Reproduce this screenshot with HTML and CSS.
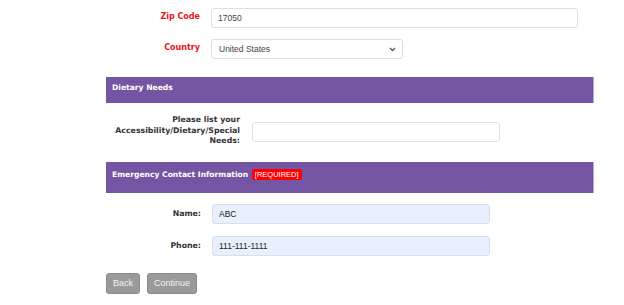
FILE: index.html
```html
<!DOCTYPE html>
<html lang="en">
<head>
    <meta charset="UTF-8">
    <title>Registration - Contact</title>
    <link rel="stylesheet" href="styles.css">
</head>
<body>
    <div class="form">
        <!-- Address tail -->
        <div class="row row-address">
            <label class="req">Zip Code</label>
            <input type="text" class="zip" value="17050">
        </div>
        <div class="row row-address row-country">
            <label class="req">Country</label>
            <div class="select-wrap">
                <select class="country">
                    <option>United States</option>
                </select>
                <svg class="chevron" width="7" height="5" viewBox="0 0 7 5"><path d="M1 1 L3.5 3.5 L6 1" fill="none" stroke="#555" stroke-width="1.3"/></svg>
            </div>
        </div>

        <!-- Dietary -->
        <div class="section-head">Dietary Needs</div>
        <div class="row row-dietary">
            <label>Please list your Accessibility/Dietary/Special Needs:</label>
            <input type="text" class="dietary">
        </div>

        <!-- Emergency contact -->
        <div class="section-head tall">Emergency Contact Information <span class="badge">[REQUIRED]</span></div>
        <div class="row row-contact">
            <label>Name:</label>
            <input type="text" class="filled" value="ABC">
        </div>
        <div class="row row-contact">
            <label>Phone:</label>
            <input type="text" class="filled" value="111-111-1111">
        </div>

        <div class="buttons">
            <button>Back</button>
            <button>Continue</button>
        </div>
    </div>
</body>
</html>
```

FILE: styles.css
```css
        body {
            margin: 0;
            background: #fff;
            font-family: 'DejaVu Sans', Verdana, sans-serif;
        }

        .form {
            width: 488px;
            margin-left: 106px;
            padding-top: 8px;
        }

        .row {
            display: grid;
            align-items: center;
        }

        .row label {
            text-align: right;
            font-weight: bold;
            font-size: 7.8px;
            color: #333;
        }

        .row label.req {
            color: #e8141b;
            font-size: 8px;
        }

        input, select {
            box-sizing: border-box;
            height: 20px;
            border: 1px solid #dedede;
            border-radius: 3px;
            background: #fff;
            font-family: 'Liberation Sans', Arial, sans-serif;
            font-size: 8.5px;
            color: #444;
            padding: 0 6px;
        }

        /* Zip / country */
        .row-address {
            grid-template-columns: 94px 367px;
            column-gap: 11px;
        }

        .row-address label {
            position: relative;
            top: -2px;
        }

        .row-country {
            margin-top: 11px;
        }

        .select-wrap {
            position: relative;
            width: 192px;
            height: 20px;
        }

        .country {
            display: block;
            width: 192px;
            padding-left: 7px;
            appearance: none;
            -webkit-appearance: none;
        }

        .chevron {
            position: absolute;
            right: 7px;
            top: 8px;
        }

        /* Purple section headers */
        .section-head {
            margin-top: 18px;
            height: 26px;
            box-sizing: border-box;
            padding: 6px 6px 0;
            background: #7455a3;
            border-right: 1px solid #b7a7d2;
            color: #fff;
            font-weight: bold;
            font-size: 7.6px;
        }

        .section-head.tall {
            margin-top: 15px;
            height: 31px;
            padding-top: 7px;
        }

        .badge {
            display: inline-block;
            background: #ff0000;
            color: #fff;
            font-family: 'Liberation Sans', Arial, sans-serif;
            font-weight: normal;
            font-size: 7.5px;
            line-height: 9px;
            padding: 1px 3px;
            border-radius: 2px;
            margin-left: 1px;
        }

        .row-dietary {
            grid-template-columns: 134px 248px;
            column-gap: 12px;
            margin-top: 12px;
        }

        .row-dietary label {
            line-height: 10.5px;
        }

        .row-dietary input {
            margin-top: 3px;
        }

        .row-contact {
            grid-template-columns: 95px 278px;
            column-gap: 11px;
            margin-top: 11px;
        }

        .row-contact + .row-contact {
            margin-top: 12px;
        }

        .filled {
            background: #e8f0fe;
            border-color: #d6dfee;
            color: #222;
        }

        .buttons {
            display: flex;
            gap: 7px;
            margin-top: 17px;
        }

        .buttons button {
            height: 21px;
            padding: 0 6px;
            background: #9a9a9a;
            border: 1px solid #8c8c8c;
            border-radius: 3px;
            color: #f2f2f2;
            font-family: 'Liberation Sans', Arial, sans-serif;
            font-size: 9px;
            cursor: pointer;
        }
```
